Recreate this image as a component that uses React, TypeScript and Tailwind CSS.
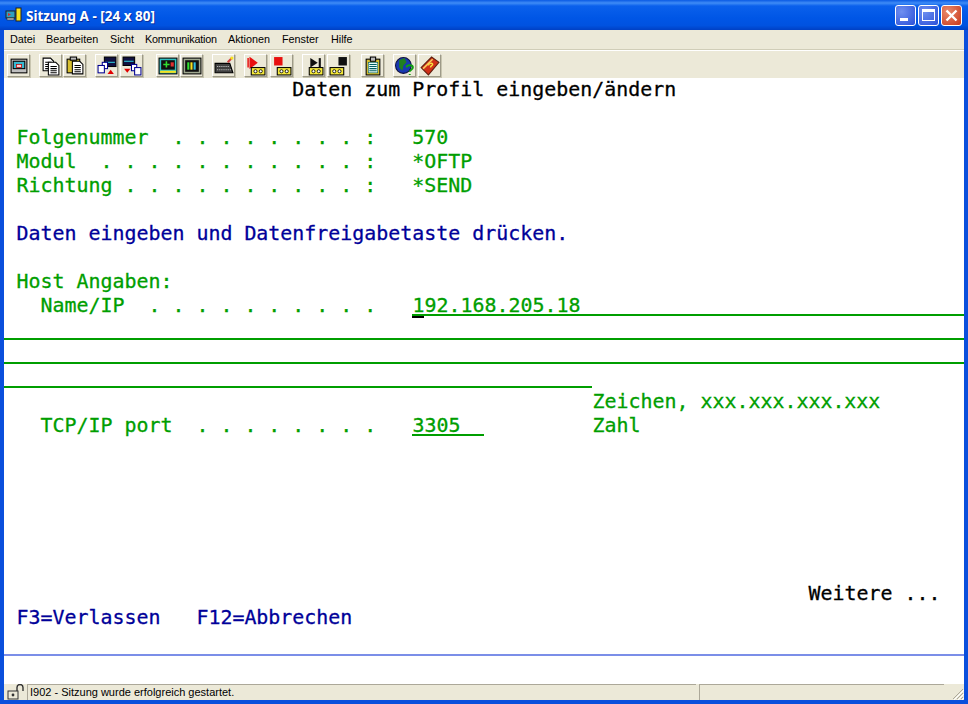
import React from "react";

const G = "text-[#009e00]";
const B = "text-[#000099]";
const K = "text-[#000000]";

function Row({ children, flush }: { children?: React.ReactNode; flush?: boolean }) {
  return (
    <div className={`flex h-[24px] items-start whitespace-pre leading-[24px] ${flush ? "" : "pl-[0.5px]"}`}>{children}</div>
  );
}

function Field({ w, children }: { w: string; children?: React.ReactNode }) {
  return <span className={`${w} box-border h-[22px] border-b-2 border-[#009e00] pl-[0.5px] ${G}`}>{children}</span>;
}

function TB({ children, m }: { children: React.ReactNode; m: string }) {
  return (
    <div
      className={`flex h-[23px] w-[23px] shrink-0 items-center justify-center border border-t-white border-l-white border-r-[#9d9a88] border-b-[#9d9a88] shadow-[1px_1px_0_#c8c5b0] ${m}`}
    >
      <svg width="20" height="20" viewBox="0 0 19 19">
        {children}
      </svg>
    </div>
  );
}

function Tape() {
  return (
    <g>
      <rect x="5" y="11" width="13" height="7" fill="#f5e93a" stroke="#000" />
      <circle cx="9" cy="14.5" r="1.5" fill="#fff" stroke="#000" strokeWidth="0.8" />
      <circle cx="14" cy="14.5" r="1.5" fill="#fff" stroke="#000" strokeWidth="0.8" />
    </g>
  );
}

function Doc({ x, y }: { x: number; y: number }) {
  return (
    <g>
      <path d={`M${x} ${y}h7l3 3v9h-10z`} fill="#fff" stroke="#000" />
      <path d={`M${x + 2} ${y + 4}h6M${x + 2} ${y + 6}h6M${x + 2} ${y + 8}h6M${x + 2} ${y + 10}h6`} stroke="#000" />
    </g>
  );
}

function Menu({ t, w }: { t: string; w: string }) {
  return <span className={`${w} shrink-0 text-[10.8px] leading-[19px] text-black`}>{t}</span>;
}

export default function App() {
  return (
    <div className="flex h-[704px] w-[968px] flex-col overflow-hidden bg-[#0a4fdc]">
      <div className="flex h-[30px] shrink-0 items-center bg-[linear-gradient(180deg,#0a5ae4_0%,#3f8cf6_10%,#0a60ec_20%,#0056e6_60%,#0052e0_85%,#0040c4_100%)] pl-[5px] pr-[6px]">
        <svg width="18" height="16" viewBox="0 0 18 16" className="mr-[3px] shrink-0">
          <rect x="1" y="4" width="9" height="7" fill="#30a0c0" stroke="#222" />
          <rect x="2" y="11" width="7" height="2" fill="#bbb" stroke="#222" strokeWidth="0.5" />
          <path d="M3 6l3 1.5-3 1.5z" fill="#e02828" />
          <rect x="11" y="1" width="5" height="13" fill="#f7e21e" stroke="#222" />
        </svg>
        <span className="flex-1 pt-[3px] font-['Noto_Sans',sans-serif] text-[13.5px] font-bold text-white [text-shadow:1px_1px_0_#0a2fa0]">
          Sitzung A - [24 x 80]
        </span>
        <div className="flex gap-[2px]">
          <div className="flex h-[21px] w-[21px] items-end rounded-[3px] border border-white bg-[radial-gradient(circle_at_30%_30%,#6f8ff0,#2a50d8)] pb-[4px] pl-[4px]">
            <div className="h-[3px] w-[8px] bg-white" />
          </div>
          <div className="flex h-[21px] w-[21px] items-center justify-center rounded-[3px] border border-white bg-[radial-gradient(circle_at_30%_30%,#6f8ff0,#2a50d8)]">
            <div className="h-[12px] w-[13px] border border-t-[3px] border-white" />
          </div>
          <div className="flex h-[21px] w-[21px] items-center justify-center rounded-[3px] border border-white bg-[radial-gradient(circle_at_30%_30%,#e98a6c,#c8381a)]">
            <svg width="13" height="13" viewBox="0 0 13 13">
              <path d="M1.5 1.5l10 10M11.5 1.5l-10 10" stroke="#fff" strokeWidth="2.4" />
            </svg>
          </div>
        </div>
      </div>

      <div className="mx-[4px] flex min-h-0 flex-1 flex-col bg-[#ece9d8]">
        <div className="flex h-[20px] shrink-0 border-b border-[#d0cdb8] pl-[6px] font-['Liberation_Sans',sans-serif]">
          <Menu t="Datei" w="w-[36px]" />
          <Menu t="Bearbeiten" w="w-[64px]" />
          <Menu t="Sicht" w="w-[35px]" />
          <Menu t="Kommunikation" w="w-[83px] tracking-[-0.2px]" />
          <Menu t="Aktionen" w="w-[54px]" />
          <Menu t="Fenster" w="w-[49px]" />
          <Menu t="Hilfe" w="w-[30px]" />
        </div>
        <div className="flex h-[28px] shrink-0 items-start border-t border-white pl-[3px] pt-[3px]">
          <TB m="mr-[9px]">
            <rect x="2" y="3" width="15" height="13" fill="#bfbfbf" stroke="#000" />
            <rect x="4" y="5" width="11" height="7" fill="#38b8d0" stroke="#000" />
            <rect x="7" y="8" width="5" height="3" fill="#ffd0d0" stroke="#c00000" strokeWidth="0.7" />
          </TB>
          <TB m="mr-[1px]">
            <Doc x={2} y={2} />
            <Doc x={7} y={6} />
          </TB>
          <TB m="mr-[9px]">
            <rect x="2" y="3" width="12" height="13" fill="#d8c030" stroke="#000" />
            <rect x="5" y="1" width="6" height="3" fill="#bbb" stroke="#000" />
            <Doc x={7} y={5} />
          </TB>
          <TB m="mr-[2px]">
            <rect x="7" y="1" width="11" height="9" fill="#101040" stroke="#000" />
            <path d="M8 6h9" stroke="#30d0e0" />
            <rect x="5" y="6" width="5" height="6" fill="#fff" stroke="#000090" />
            <rect x="1" y="9" width="6" height="7" fill="#fff" stroke="#000090" />
            <path d="M10 17l3-4 3 4z" fill="#e00000" />
          </TB>
          <TB m="mr-[13px]">
            <rect x="1" y="1" width="11" height="8" fill="#101040" stroke="#000" />
            <path d="M2 5h9" stroke="#30d0e0" />
            <rect x="9" y="8" width="5" height="6" fill="#fff" stroke="#000090" />
            <rect x="12" y="11" width="6" height="7" fill="#fff" stroke="#000090" />
            <path d="M2 12l3 4 3-4z" fill="#e00000" />
          </TB>
          <TB m="mr-[1px]">
            <rect x="1" y="2" width="17" height="15" fill="#30c0c0" stroke="#000" />
            <rect x="3" y="4" width="13" height="9" fill="#101010" />
            <path d="M5 8h6M8 5v6" stroke="#30e030" strokeWidth="1.5" />
            <rect x="12" y="6" width="3" height="4" fill="#e03030" />
            <rect x="2" y="14" width="15" height="2" fill="#f7e21e" />
          </TB>
          <TB m="mr-[9px]">
            <rect x="1" y="2" width="17" height="15" fill="#a0a890" stroke="#000" />
            <rect x="3" y="4" width="13" height="11" fill="#101010" />
            <path d="M6 6v7" stroke="#30e030" strokeWidth="2" />
            <path d="M9 6v7" stroke="#f7e21e" strokeWidth="2" />
            <path d="M12 6v7" stroke="#30c0e0" strokeWidth="2" />
          </TB>
          <TB m="mr-[9px]">
            <path d="M1 7h14l3 9H1z" fill="#404040" stroke="#000" />
            <path d="M3 10h12M3 13h13" stroke="#ccc" strokeDasharray="1 1" />
            <path d="M13 6l4-4" stroke="#d04040" strokeWidth="2" />
            <circle cx="17" cy="2" r="1.5" fill="#f7e21e" />
          </TB>
          <TB m="mr-[3px]">
            <path d="M2 2v9M4 2l6 4.5-6 4.5z" fill="#e81010" stroke="#e81010" strokeWidth="1.4" />
            <Tape />
          </TB>
          <TB m="mr-[9px]">
            <rect x="2" y="1" width="8" height="8" fill="#e81010" />
            <Tape />
          </TB>
          <TB m="mr-[2px]">
            <path d="M6 2l7 4.5-7 4.5z" fill="#101010" />
            <path d="M15 2v9" stroke="#101010" strokeWidth="2" />
            <Tape />
          </TB>
          <TB m="mr-[11px]">
            <rect x="9" y="1" width="8" height="8" fill="#101010" />
            <g transform="translate(-4 0)">
              <Tape />
            </g>
          </TB>
          <TB m="mr-[9px]">
            <rect x="3" y="3" width="13" height="15" fill="#d8c030" stroke="#000" />
            <rect x="7" y="1" width="5" height="4" fill="#bbb" stroke="#000" />
            <rect x="5" y="6" width="9" height="10" fill="#e8fafa" stroke="#006060" strokeWidth="0.6" />
            <path d="M6 8h7M6 10h7M6 12h7M6 14h7" stroke="#006060" />
          </TB>
          <TB m="mr-[2px]">
            <circle cx="8" cy="9" r="7.5" fill="#1838b0" stroke="#101040" />
            <path d="M4 4l5-2 2 4-3 3-1 5-3-3z" fill="#208020" />
            <path d="M11 11c0-3 6-3 6 0 0 2-3 2-3 4M14 17v1" fill="none" stroke="#10a010" strokeWidth="1.8" />
          </TB>
          <TB m="">
            <path d="M1 11L11 1l7 5-10 12z" fill="#d03018" stroke="#602010" />
            <path d="M3 12L12 3" stroke="#f8d060" strokeWidth="1.4" />
            <path d="M8 9c0-2 4-3 4-1 0 1-2 1-2 3" fill="none" stroke="#f8e040" strokeWidth="1.4" />
          </TB>
        </div>

        <div className="flex h-[578px] shrink-0 flex-col bg-white font-['DejaVu_Sans_Mono',monospace] text-[19.93px] [-webkit-text-stroke:0.3px]">
          <Row>
            <span className={K}>{"                        Daten zum Profil eingeben/ändern"}</span>
          </Row>
          <Row />
          <Row>
            <span className={G}>{" Folgenummer  . . . . . . . . :   570"}</span>
          </Row>
          <Row>
            <span className={G}>{" Modul  . . . . . . . . . . . :   *OFTP"}</span>
          </Row>
          <Row>
            <span className={G}>{" Richtung . . . . . . . . . . :   *SEND"}</span>
          </Row>
          <Row />
          <Row>
            <span className={B}>{" Daten eingeben und Datenfreigabetaste drücken."}</span>
          </Row>
          <Row />
          <Row>
            <span className={G}>{" Host Angaben:"}</span>
          </Row>
          <Row flush>
            <span className={`${G} w-[408px] pl-[0.5px]`}>{"   Name/IP  . . . . . . . . . ."}</span>
            <span className={`${G} relative box-border h-[22px] flex-1 border-b-2 border-[#009e00] pl-[0.5px]`}>
              192.168.205.18
              <span className="absolute left-0 top-[22px] h-[2px] w-[12px] bg-black" />
            </span>
          </Row>
          <Row flush>
            <Field w="w-full" />
          </Row>
          <Row flush>
            <Field w="w-full" />
          </Row>
          <Row flush>
            <Field w="w-[588px]" />
          </Row>
          <Row>
            <span className="w-[588px]" />
            <span className={G}>Zeichen, xxx.xxx.xxx.xxx</span>
          </Row>
          <Row flush>
            <span className={`${G} w-[408px] pl-[0.5px]`}>{"   TCP/IP port  . . . . . . . ."}</span>
            <Field w="w-[72px]">3305</Field>
            <span className="w-[108.5px]" />
            <span className={G}>Zahl</span>
          </Row>
          <Row />
          <Row />
          <Row />
          <Row />
          <Row />
          <Row />
          <Row>
            <span className={`${K} w-full pr-[23.5px] text-right`}>Weitere ...</span>
          </Row>
          <Row>
            <span className={B}>{" F3=Verlassen   F12=Abbrechen"}</span>
          </Row>
          <Row />
          <div className="h-[2px] bg-[#7b8ee8]" />
        </div>

        <div className="min-h-0 flex-1 bg-white" />

        <div className="flex h-[16px] shrink-0 items-stretch bg-[#ece9d8] font-['Liberation_Sans',sans-serif]">
          <div className="flex w-[23px] items-center justify-center">
            <svg width="20" height="16" viewBox="0 0 20 16">
              <rect x="2" y="7" width="10" height="8" fill="#ece9d8" stroke="#333" />
              <circle cx="7" cy="11" r="1.4" fill="#333" />
              <path d="M11 7V3.5a3 3 0 0 1 6 0V7" fill="none" stroke="#333" strokeWidth="1.4" />
            </svg>
          </div>
          <div className="w-[669px] border-t border-l border-[#aca899] pl-[2px] text-[11px] leading-[15px] text-black">
            I902 - Sitzung wurde erfolgreich gestartet.
          </div>
          <div className="w-[3px]" />
          <div className="w-[245px] border-t border-l border-[#aca899]" />
          <div className="flex flex-1 items-end justify-end">
            <svg width="13" height="13" viewBox="0 0 13 13">
              <path d="M12 2L2 12M12 6l-6 6M12 10l-2 2" stroke="#aca899" />
              <path d="M13 3L3 13M13 7l-6 6M13 11l-2 2" stroke="#fff" />
            </svg>
          </div>
        </div>
      </div>
      <div className="h-[4px] shrink-0" />
    </div>
  );
}
